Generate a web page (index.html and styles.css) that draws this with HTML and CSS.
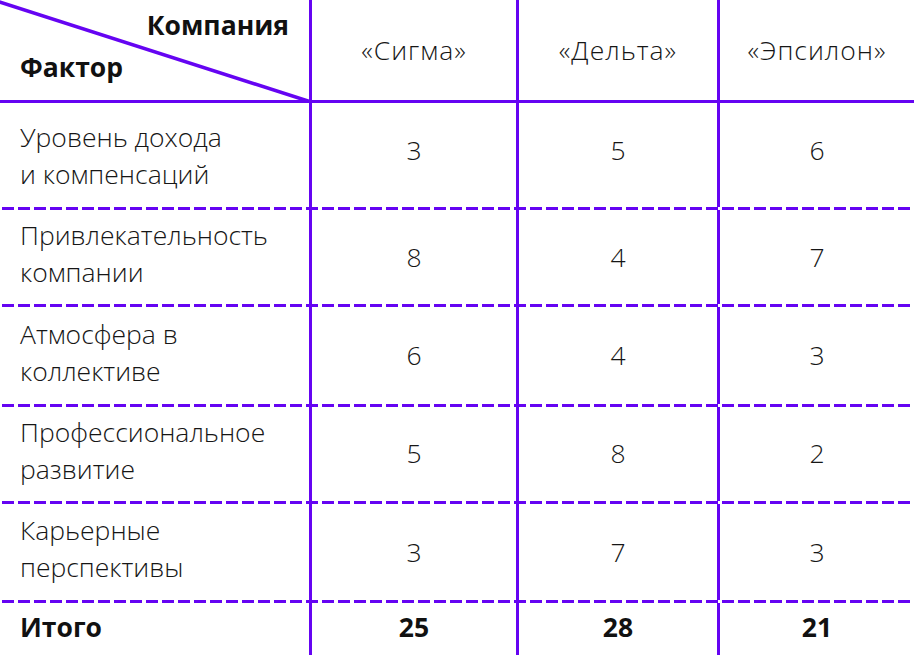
FILE: index.html
```html
<!DOCTYPE html>
<html lang="ru">
<head>
<meta charset="utf-8">
<link rel="stylesheet" href="styles.css">
</head>
<body>
<div class="table">
  <div class="row head">
    <div class="cell corner">
      <svg class="diag" width="310" height="103" viewBox="0 0 310 103"><line x1="-2" y1="1.5" x2="311" y2="102" stroke="#6504f2" stroke-width="3.5"/></svg>
      <span class="comp">Компания</span>
      <span class="fact">Фактор</span>
    </div>
    <div class="cell num">«Сигма»</div>
    <div class="cell num">«Дельта»</div>
    <div class="cell num">«Эпсилон»</div>
  </div>
  <div class="row dash r1">
    <div class="cell label">Уровень дохода<br>и компенсаций</div>
    <div class="cell num">3</div>
    <div class="cell num">5</div>
    <div class="cell num">6</div>
  </div>
  <div class="row dash r2">
    <div class="cell label">Привлекательность<br>компании</div>
    <div class="cell num">8</div>
    <div class="cell num">4</div>
    <div class="cell num">7</div>
  </div>
  <div class="row dash r3">
    <div class="cell label">Атмосфера в<br>коллективе</div>
    <div class="cell num">6</div>
    <div class="cell num">4</div>
    <div class="cell num">3</div>
  </div>
  <div class="row dash r4">
    <div class="cell label">Профессиональное<br>развитие</div>
    <div class="cell num">5</div>
    <div class="cell num">8</div>
    <div class="cell num">2</div>
  </div>
  <div class="row dash r5">
    <div class="cell label">Карьерные<br>перспективы</div>
    <div class="cell num">3</div>
    <div class="cell num">7</div>
    <div class="cell num">3</div>
  </div>
  <div class="row total">
    <div class="cell label">Итого</div>
    <div class="cell num">25</div>
    <div class="cell num">28</div>
    <div class="cell num">21</div>
  </div>
</div>
</body>
</html>
```
FILE: styles.css
```css
html, body {
  margin: 0;
  padding: 0;
  background: #ffffff;
}
body {
  font-family: "Open Sans", "Liberation Sans", sans-serif;
  color: #161616;
  font-size: 26.5px;
  font-weight: 300;
}
.table {
  width: 914px;
  height: 655px;
  overflow: hidden;
}
.row {
  display: grid;
  grid-template-columns: 309px 207px 201px 197px;
  box-sizing: border-box;
}
.cell {
  box-sizing: border-box;
  border-left: 3px solid #6504f2;
  display: flex;
  align-items: center;
  line-height: 37px;
}
.cell:first-child {
  border-left: none;
}
.num {
  justify-content: center;
}
.label {
  padding-left: 20px;
}
.head {
  height: 103px;
  border-bottom: 3px solid #6504f2;
}
.head .num {
  padding-top: 1px;
  letter-spacing: 1px;
}
.corner {
  position: relative;
  font-weight: 700;
  color: #111;
}
.diag {
  position: absolute;
  left: 0;
  top: 0;
}
.comp {
  position: absolute;
  right: 20px;
  top: 7px;
}
.fact {
  position: absolute;
  left: 20px;
  top: 49px;
}
.dash {
  background-image: repeating-linear-gradient(to right, #6504f2 0, #6504f2 12px, transparent 12px, transparent 16px);
  background-size: 100% 3px;
  background-position: 2px bottom;
  background-repeat: no-repeat;
  padding-bottom: 3px;
}
.dash .label {
  padding-bottom: 6px;
}
.r1 .label {
  padding-bottom: 0;
  padding-top: 2px;
}
.r1 { height: 107px; }
.r2 { height: 97px; }
.r3 { height: 100px; }
.r4 { height: 97px; }
.r5 { height: 99px; }
.r1 .num { padding-bottom: 10px; }
.r4 .num { padding-bottom: 1px; }
.total {
  height: 52px;
  font-weight: 700;
  color: #111;
}
.total .cell {
  padding-bottom: 4px;
}
```
